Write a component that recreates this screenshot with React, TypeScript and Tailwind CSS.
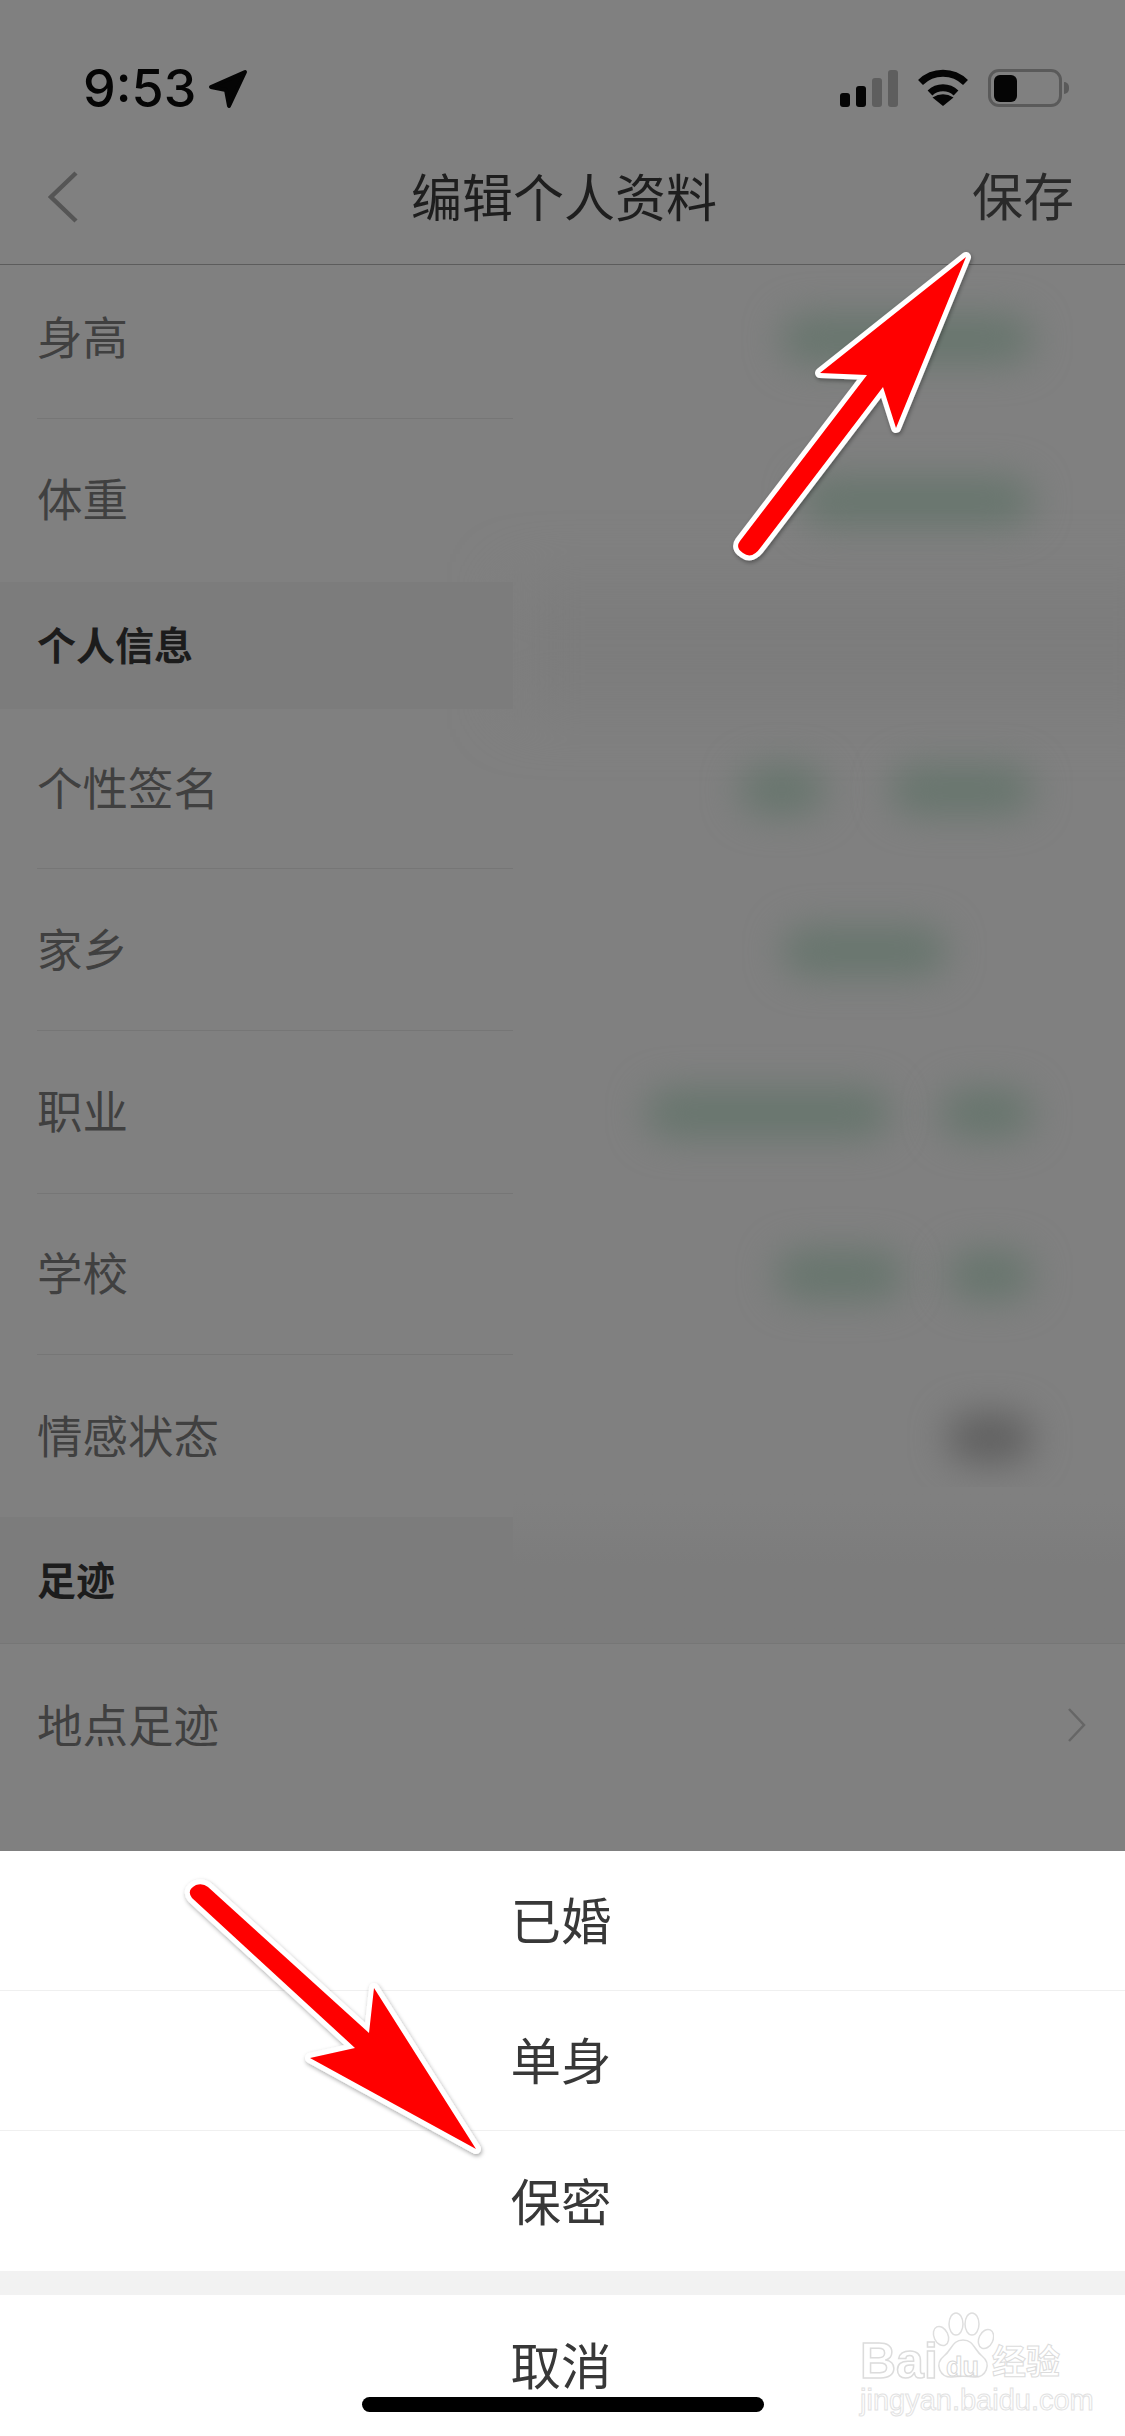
const Blob = ({ w, gray }: { w: string; gray?: boolean }) => (
  <div className={`${w} h-[50px] rounded-full blur-[18px] ${gray ? "bg-[#606060]" : "bg-[#67756d]"}`} />
);

function Row({ label, h, blobs, divider = true }: { label: string; h: string; blobs?: React.ReactNode; divider?: boolean }) {
  return (
    <div className={`relative flex ${h} items-center justify-between pl-[37px] pr-[92px]`}>
      <span className="-translate-y-[3px] text-[45.5px] leading-none text-[#404040]">{label}</span>
      <div className="flex items-center">{blobs}</div>
      {divider && <div className="absolute bottom-0 left-[37px] h-px w-[476px] bg-[#767676]" />}
    </div>
  );
}

function Section({ label, h, right }: { label: string; h: string; right: React.ReactNode }) {
  return (
    <div className={`relative flex ${h} items-center pl-[37px]`}>
      {right}
      <div className="absolute inset-y-0 left-0 w-[513px] bg-[#7c7c7c]" />
      <span className="relative -translate-y-[2px] text-[39px] font-bold leading-none text-[#1c1c1c]">{label}</span>
    </div>
  );
}

function SheetItem({ label, border = true }: { label: string; border?: boolean }) {
  return (
    <div className={`flex h-[140px] items-center justify-center pr-[3px] text-[50.5px] leading-none text-[#383838] ${border ? "border-b border-[#f0f0f0]" : ""}`}>
      <span className="-translate-y-[2px]">{label}</span>
    </div>
  );
}

export default function App() {
  return (
    <div className="relative flex h-[2436px] w-[1125px] flex-col overflow-hidden bg-[#808080] font-['Noto_Sans_CJK_SC','Noto_Sans',sans-serif]">
      {/* status bar */}
      <div className="flex h-[148px] shrink-0 items-start justify-between pl-[83px] pr-[56px] pt-[69px]">
        <div className="flex items-center gap-[12px]">
          <span className="font-['Inter',sans-serif] text-[52px] font-medium leading-[40px] text-[#050505]">9:53</span>
          <svg width="40" height="40" viewBox="0 0 40 40">
            <path d="M3 18 L37 3 L21 37 L18 21 Z" fill="#050505" stroke="#050505" strokeWidth="4" strokeLinejoin="round" />
          </svg>
        </div>
        <div className="flex items-start gap-[19px]">
          <div className="flex h-[38px] items-end gap-[6px]">
            <div className="h-[14px] w-[10px] rounded-[3px] bg-[#050505]" />
            <div className="h-[21px] w-[10px] rounded-[3px] bg-[#050505]" />
            <div className="h-[29px] w-[10px] rounded-[3px] bg-[#5e5e5e]" />
            <div className="h-[37px] w-[10px] rounded-[3px] bg-[#5e5e5e]" />
          </div>
          <svg width="52" height="38" viewBox="0 0 52 38" fill="none">
            <path d="M3.5 13.5 A32 32 0 0 1 48.5 13.5" stroke="#050505" strokeWidth="7" />
            <path d="M13 24 A19 19 0 0 1 39 24" stroke="#050505" strokeWidth="7" />
            <path d="M26 37 L15.5 28.5 Q26 22 36.5 28.5 Z" fill="#050505" />
          </svg>
          <div className="flex items-center">
            <div className="flex h-[38px] w-[74px] items-center rounded-[11px] border-[3px] border-[#5a5a5a] pl-[3px]">
              <div className="h-[27px] w-[23px] rounded-[6px] bg-[#050505]" />
            </div>
            <div className="ml-[2px] h-[12px] w-[5px] rounded-r-full bg-[#5a5a5a]" />
          </div>
        </div>
      </div>

      {/* nav */}
      <div className="relative flex h-[117px] shrink-0 items-center justify-between border-b border-[#5c5c5c] pb-[18px] pl-[48px] pr-[51px]">
        <svg width="30" height="52" viewBox="0 0 30 52" fill="none">
          <path d="M28 2 L3 26 L28 50" stroke="#555555" strokeWidth="4.5" />
        </svg>
        <span className="absolute left-[411px] top-[19px] text-[51px] leading-[56px] text-[#1e1e1e]">编辑个人资料</span>
        <span className="-translate-y-[3px] text-[51px] leading-[56px] text-[#2a2a2a]">保存</span>
      </div>

      {/* list */}
      <div className="flex flex-1 flex-col">
        <Row label="身高" h="h-[154px] pb-[6px]" blobs={<Blob w="w-[252px]" />} />
        <Row label="体重" h="h-[163px]" blobs={<Blob w="w-[232px]" />} divider={false} />
        <Section
          label="个人信息"
          h="h-[127px]"
          right={<div className="absolute -right-[60px] inset-y-0 left-[513px] bg-[#7c7c7c] blur-[30px]" />}
        />
        <Row label="个性签名" h="h-[160px] pt-[2px]" blobs={<><Blob w="w-[86px]" /><div className="w-[65px]" /><Blob w="w-[143px]" /></>} />
        <Row label="家乡" h="h-[162px] pt-[2px]" blobs={<><Blob w="w-[165px]" /><div className="w-[86px]" /></>} />
        <Row label="职业" h="h-[163px]" blobs={<><Blob w="w-[245px]" /><div className="w-[50px]" /><Blob w="w-[93px]" /></>} />
        <Row label="学校" h="h-[161px]" blobs={<><Blob w="w-[129px]" /><div className="w-[43px]" /><Blob w="w-[86px]" /></>} />
        <Row label="情感状态" h="h-[162px] pt-[3px]" blobs={<Blob w="w-[86px]" gray />} divider={false} />
        <Section
          label="足迹"
          h="h-[127px] border-b border-[#767676]"
          right={<div className="absolute -top-[30px] bottom-0 left-[513px] right-0 bg-linear-to-b from-[#808080] from-10% to-[#7c7c7c] to-50%" />}
        />
        <div className="flex h-[162px] items-center justify-between pl-[37px] pr-[38px]">
          <span className="-translate-y-[1px] text-[45.5px] leading-none text-[#404040]">地点足迹</span>
          <svg width="20" height="36" viewBox="0 0 20 36" fill="none">
            <path d="M2 2 L17 18 L2 34" stroke="#666666" strokeWidth="2.5" />
          </svg>
        </div>
      </div>

      {/* action sheet */}
      <div className="flex h-[585px] shrink-0 flex-col bg-white">
        <SheetItem label="已婚" />
        <SheetItem label="单身" />
        <SheetItem label="保密" border={false} />
        <div className="h-[24px] bg-[#f2f2f2]" />
        <div className="flex flex-1 items-center justify-center pr-[3px] text-[50.5px] leading-none text-[#383838]">
          <span className="-translate-y-[2px]">取消</span>
        </div>
      </div>

      {/* home indicator */}
      <div className="absolute left-[362px] top-[2397px] h-[15px] w-[402px] rounded-full bg-black" />

      {/* annotation arrows */}
      <svg className="pointer-events-none absolute left-0 top-0" width="1125" height="2436" viewBox="0 0 1125 2436">
        <defs>
          <filter id="sh" x="-20%" y="-20%" width="140%" height="140%">
            <feDropShadow dx="1" dy="2" stdDeviation="2" floodColor="#000" floodOpacity="0.35" />
          </filter>
        </defs>
        <path
          d="M966 257 L896 428 L883 387 L761 547 Q752 560 743 553 Q735 548 740 541 L867 375 L820 373 Z"
          fill="#ff0000"
          stroke="#ffffff"
          strokeWidth="10"
          strokeLinejoin="round"
          paintOrder="stroke"
          filter="url(#sh)"
        />
        <path
          d="M476 2149 L310 2058 L355 2048 L192 1898 Q186 1890 196 1885 Q203 1883 208 1887 L369 2033 L374 1988 Z"
          fill="#ff0000"
          stroke="#ffffff"
          strokeWidth="10"
          strokeLinejoin="round"
          paintOrder="stroke"
          filter="url(#sh)"
        />
      </svg>

      {/* watermark */}
      <div className="pointer-events-none absolute left-[860px] top-[2312px] h-[104px] w-[210px] text-white">
        <span className="absolute left-0 top-[27px] font-['Liberation_Sans',sans-serif] text-[50px] font-bold leading-[44px] [-webkit-text-stroke:1.5px_#dcdcdc]">Bai</span>
        <svg className="absolute left-[72px] top-0" width="62" height="70" viewBox="0 0 62 70" fill="white" stroke="#dedede" strokeWidth="1.5">
          <ellipse cx="9" cy="24" rx="7" ry="10" transform="rotate(-25 9 24)" />
          <ellipse cx="24" cy="12" rx="7" ry="11" />
          <ellipse cx="40" cy="12" rx="7" ry="11" />
          <ellipse cx="54" cy="27" rx="7" ry="10" transform="rotate(25 54 27)" />
          <path d="M31 28 C42 28 42 38 50 44 C60 52 54 66 42 65 C34 64 28 64 20 65 C8 66 2 52 12 44 C20 38 20 28 31 28 Z" />
        </svg>
        <span className="absolute left-[86px] top-[42px] font-['Liberation_Sans',sans-serif] text-[27px] font-bold leading-[26px] text-white [-webkit-text-stroke:1px_#d8d8d8]">du</span>
        <span className="absolute left-[132px] top-[26px] text-[34px] font-bold leading-[44px] [-webkit-text-stroke:1px_#dcdcdc]">经验</span>
        <span className="absolute left-0 top-[72px] whitespace-nowrap font-['Liberation_Sans',sans-serif] text-[29px] leading-[32px] [-webkit-text-stroke:1px_#e2e2e2]">jingyan.baidu.com</span>
      </div>
    </div>
  );
}
